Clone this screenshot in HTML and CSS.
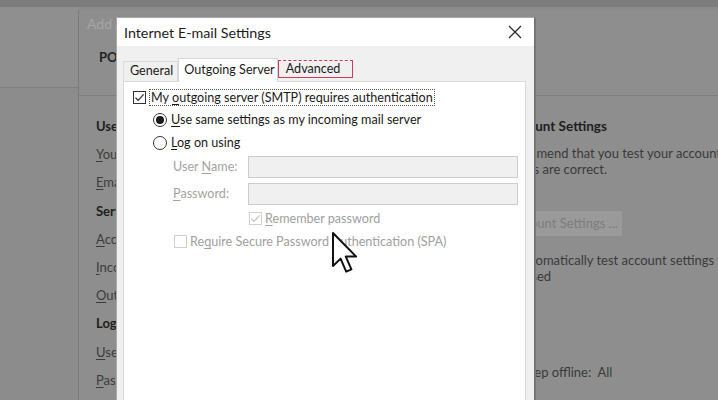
FILE: index.html
```html
<!DOCTYPE html>
<html>
<head>
<meta charset="utf-8">
<link rel="stylesheet" href="styles.css">
</head>
<body>
<div class="desk-top"></div>
<div class="win-behind"></div>

<div class="backwin">
  <div class="bw-header">
    <div class="bw-title">Add Account</div>
    <div class="bw-sub">POP and IMAP Account Settings</div>
  </div>
  <div class="bw-body">
    <div class="bw-left">
      <div class="bw-row b">User Information</div>
      <div class="bw-row"><u>Y</u>our Name:</div>
      <div class="bw-row"><u>E</u>mail Address:</div>
      <div class="bw-row b">Server Information</div>
      <div class="bw-row"><u>A</u>ccount Type:</div>
      <div class="bw-row"><u>I</u>ncoming mail server:</div>
      <div class="bw-row"><u>O</u>utgoing mail server (SMTP):</div>
      <div class="bw-row b">Logon Information</div>
      <div class="bw-row"><u>U</u>ser Name:</div>
      <div class="bw-row"><u>P</u>assword:</div>
    </div>
    <div class="bw-right">
      <div class="bw-rt b">Test Account Settings</div>
      <div class="bw-p bw-p1">We recommend that you test your account to ensure that</div>
      <div class="bw-p">the entries are correct.</div>
      <div class="bw-btn">Test Account Settings ...</div>
      <div class="bw-p bw-auto">Automatically test account settings when Next</div>
      <div class="bw-p bw-auto2">is pressed</div>
      <div class="bw-p bw-keep">Mail to keep offline:&nbsp;&nbsp;All</div>
    </div>
  </div>
</div>

<div class="dialog">
  <div class="dlg-title">
    <span>Internet E-mail Settings</span>
    <svg class="close" width="14" height="14" viewBox="0 0 14 14"><path d="M1 1 L13 13 M13 1 L1 13" stroke="#2b2b2b" stroke-width="1.3" fill="none"/></svg>
  </div>
  <div class="dlg-body">
    <div class="tabs">
      <div class="tab">General</div>
      <div class="tab sel">Outgoing Server</div>
      <div class="tab adv">Advanced</div>
    </div>
    <div class="panel">
      <div class="row r-auth">
        <span class="cb on"><svg width="13" height="13" viewBox="0 0 13 13"><path d="M2.5 6.8 L5.2 9.4 L10.6 3.4" stroke="#333" stroke-width="1.3" fill="none"/></svg></span>
        <span class="focus">My <u>o</u>utgoing server (SMTP) requires authentication</span>
      </div>
      <div class="row r-radio1">
        <span class="radio on"><span class="dot"></span></span>
        <span><u>U</u>se same settings as my incoming mail server</span>
      </div>
      <div class="row r-radio2">
        <span class="radio"></span>
        <span><u>L</u>og on using</span>
      </div>
      <div class="row r-field">
        <span class="lbl">User <u>N</u>ame:</span>
        <span class="inp"></span>
      </div>
      <div class="row r-field r-field2">
        <span class="lbl"><u>P</u>assword:</span>
        <span class="inp"></span>
      </div>
      <div class="row r-remember dis">
        <span class="cb dcb"><svg width="13" height="13" viewBox="0 0 13 13"><path d="M2.5 6.8 L5.2 9.4 L10.6 3.4" stroke="#c4c4c4" stroke-width="1.3" fill="none"/></svg></span>
        <span><u>R</u>emember password</span>
      </div>
      <div class="row r-spa dis">
        <span class="cb dcb"></span>
        <span>Re<u>q</u>uire Secure Password Authentication (SPA)</span>
      </div>
    </div>
  </div>
</div>

<svg class="cursor" width="28" height="44" viewBox="0 0 14 22">
  <path d="M1 1 V17.5 L4.8 13.8 L7.6 20.3 L10.2 19.2 L7.4 12.8 H12.6 Z" fill="#fff" stroke="#111" stroke-width="1" stroke-linejoin="round"/>
</svg>
</body>
</html>
```
FILE: styles.css
```css
* { box-sizing: border-box; }
html, body { margin: 0; padding: 0; }
body {
  width: 718px;
  height: 400px;
  overflow: hidden;
  position: relative;
  background: #8c8c8c;
  font-family: "Lato", "Liberation Sans", sans-serif;
  font-size: 13px;
  color: #1a1a1a;
}
u { text-decoration: underline; text-underline-offset: 2px; text-decoration-thickness: 1px; }

.desk-top { height: 7px; background: #7c7c7c; }
.win-behind {
  position: absolute; left: 0; top: 7px; width: 78px; height: 81px;
  background: #8f8f8f; border-bottom: 1px solid #7f7f7f;
}

.backwin {
  position: absolute; left: 78px; top: 10px; right: 0; bottom: 0;
  overflow: hidden;
  background: #8e8e8e; border-left: 1px solid #7b7b7b;
}
.bw-header { height: 86px; border-bottom: 1px solid #808080; padding-left: 8px; }
.bw-title { padding-top: 5px; line-height: 18px; font-size: 14px; color: #a6a6a6; }
.bw-sub { margin-top: 15px; padding-left: 12px; line-height: 18px; font-size: 13px; font-weight: 700; color: #222; }
.bw-body { display: flex; padding-top: 16px; }
.bw-left { width: 399px; flex: none; padding-left: 17px; }
.bw-row { height: 28.2px; line-height: 28px; color: #3c3c3c; white-space: nowrap; }
.b { font-weight: 700; color: #1e1e1e; }
.bw-right { color: #3a3a3a; white-space: nowrap; }
.bw-rt { line-height: 28px; font-size: 13.5px; }
.bw-p { line-height: 16px; }
.bw-p1 { margin-top: 5px; }
.bw-btn {
  margin-top: 34px; margin-left: -15px; width: 159px; height: 25px; line-height: 25px;
  background: #9a9a9a; color: #7d7d7d; padding-left: 20px;
}
.bw-auto { margin-top: 16px; padding-left: 37px; }
.bw-auto2 { padding-left: 17px; }
.bw-keep { margin-top: 80px; }

.dialog {
  position: absolute; left: 116px; top: 17px; width: 419px; height: 400px;
  background: #f0f0f0; border: 1px solid #a9a9a9; border-right-color: #6f6f6f;
  box-shadow: 1px 0 0 #7a7a7a;
  font-size: 12.6px;
}
.dlg-title {
  height: 28px; background: #fff; display: flex; align-items: center;
  justify-content: space-between; padding: 0 12px 0 7px;
  font-size: 14.3px; color: #1b1b1b;
}
.close { display: block; }
.dlg-body { padding: 0 8px 0 6px; }
.tabs { display: flex; align-items: flex-end; height: 35px; }
.tab {
  height: 20px; line-height: 18px; padding: 0 4px 0 6px; background: #f0f0f0;
  border: 1px solid #dadada; border-bottom: none; color: #1b1b1b; white-space: nowrap;
}
.tab.sel {
  height: 24px; line-height: 21px; background: #fff; padding: 0 2px 0 5px;
  margin-bottom: -1px; position: relative; z-index: 1; border-color: #d6d6d6;
}
.tab.adv {
  height: 18px; line-height: 15px; margin-bottom: 3px;
  padding: 0 12px 0 7px; border: 1.5px solid #d03c58; border-top-style: dashed;
  background: #f0f0f0;
}
.panel {
  background: #fff; border: 1px solid #d9d9d9; height: 330px;
  padding: 7px 0 0 9px;
}
.row { display: flex; align-items: center; white-space: nowrap; }
.cb {
  width: 13px; height: 13px; border: 1px solid #333; background: #fff;
  display: flex; align-items: center; justify-content: center; flex: none;
}
.cb svg { display: block; margin: -1px; }
.r-auth { height: 17px; }
.r-auth .cb { margin-right: 3px; }
.focus { border: 1px dotted #555; padding: 0 1px; line-height: 15px; height: 17px; }
.r-radio1 { margin-top: 2px; margin-left: 20px; height: 23px; }
.r-radio2 { margin-left: 20px; height: 23px; }
.radio {
  width: 14px; height: 14px; border: 1px solid #333; border-radius: 50%;
  margin-right: 4px; display: flex; align-items: center; justify-content: center; flex: none;
}
.dot { width: 8px; height: 8px; border-radius: 50%; background: #1a1a1a; }
.r-field { margin-top: -1px; margin-left: 40px; height: 27px; }
.r-field .lbl { width: 75px; color: #a3a3a3; }
.inp { width: 270px; height: 22px; background: #f0f0f0; border: 1px solid #cccccc; }
.r-field2 { margin-top: 0; height: 27px; }
.dis { color: #a0a0a0; }
.dcb { border-color: #cfcfcf; }
.r-remember { margin-left: 116px; height: 23px; }
.r-remember .cb { margin-right: 3px; }
.r-spa { margin-left: 41px; height: 23px; }
.r-spa .cb { margin-right: 3px; }

.cursor { position: absolute; left: 331px; top: 231px; }
```
